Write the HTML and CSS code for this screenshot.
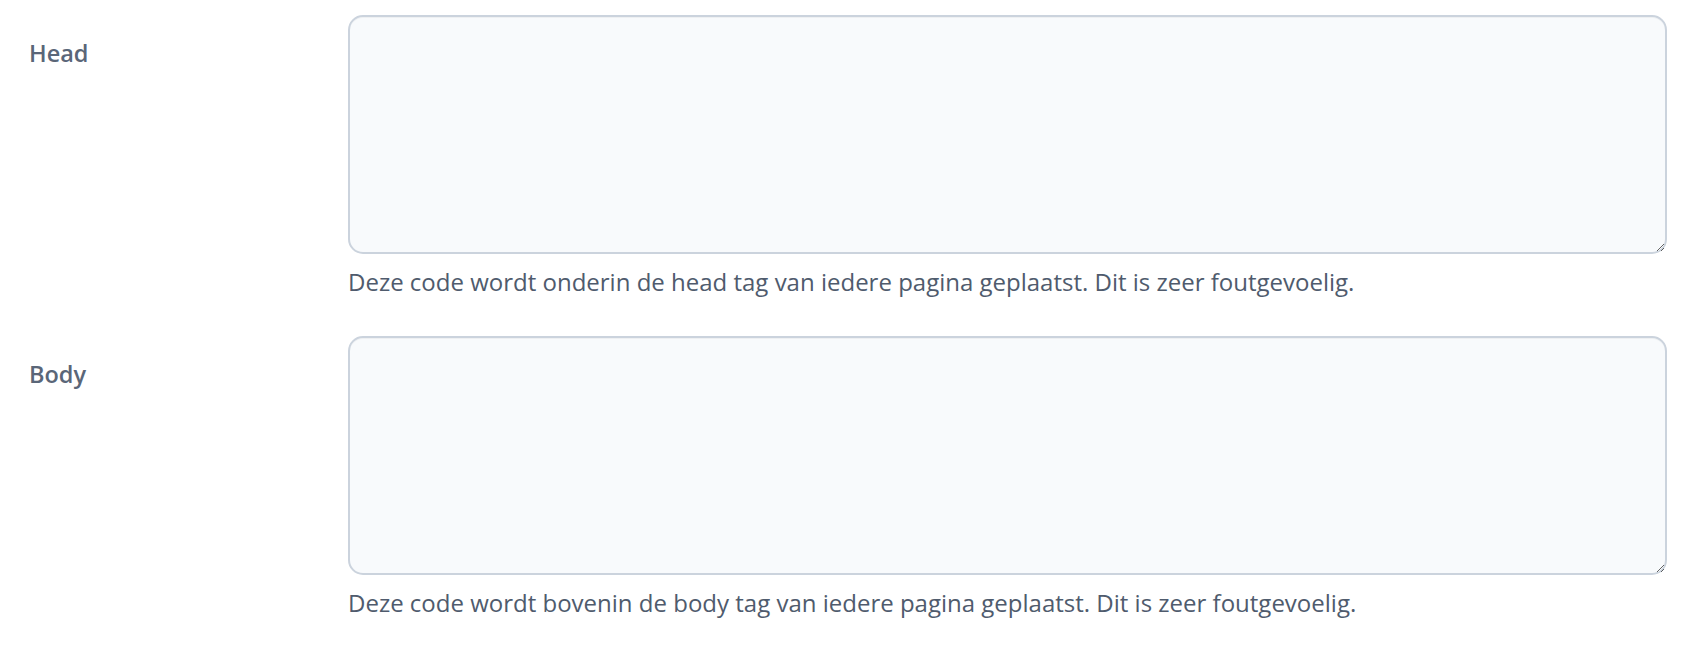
FILE: index.html
```html
<!DOCTYPE html>
<html lang="nl">
<head>
<meta charset="utf-8">
<link rel="stylesheet" href="styles.css">
</head>
<body>
<div class="form">
  <div class="row">
    <label class="label" for="head">Head</label>
    <div class="field">
      <textarea id="head" class="input"></textarea>
      <p class="help">Deze code wordt onderin de head tag van iedere pagina geplaatst. Dit is zeer foutgevoelig.</p>
    </div>
  </div>
  <div class="row">
    <label class="label" for="body">Body</label>
    <div class="field">
      <textarea id="body" class="input"></textarea>
      <p class="help">Deze code wordt bovenin de body tag van iedere pagina geplaatst. Dit is zeer foutgevoelig.</p>
    </div>
  </div>
</div>
</body>
</html>
```

FILE: styles.css
```css
html, body {
  margin: 0;
  padding: 0;
  background: #ffffff;
}
body {
  font-family: "Open Sans", "Noto Sans", sans-serif;
}
.form {
  display: flex;
  flex-direction: column;
  gap: 38px;
  padding: 15px 27px 0 29px;
}
.row {
  display: grid;
  grid-template-columns: 319px 1fr;
}
.label {
  font-size: 23.5px;
  font-weight: 600;
  color: #5a6678;
  line-height: 32px;
  padding-top: 22px;
}
.field {
  display: flex;
  flex-direction: column;
}
.input {
  box-sizing: border-box;
  width: 100%;
  height: 239px;
  margin: 0;
  border: 2px solid #cbd3dd;
  border-radius: 15px;
  background: #f8fafc;
  box-shadow: inset 0 1px 0 rgba(0,0,0,0.04);
  resize: vertical;
  font-family: inherit;
  font-size: 22px;
}
.help {
  margin: 12px 0 0 0;
  font-size: 24px;
  line-height: 32px;
  color: #4f5b6d;
}
```
